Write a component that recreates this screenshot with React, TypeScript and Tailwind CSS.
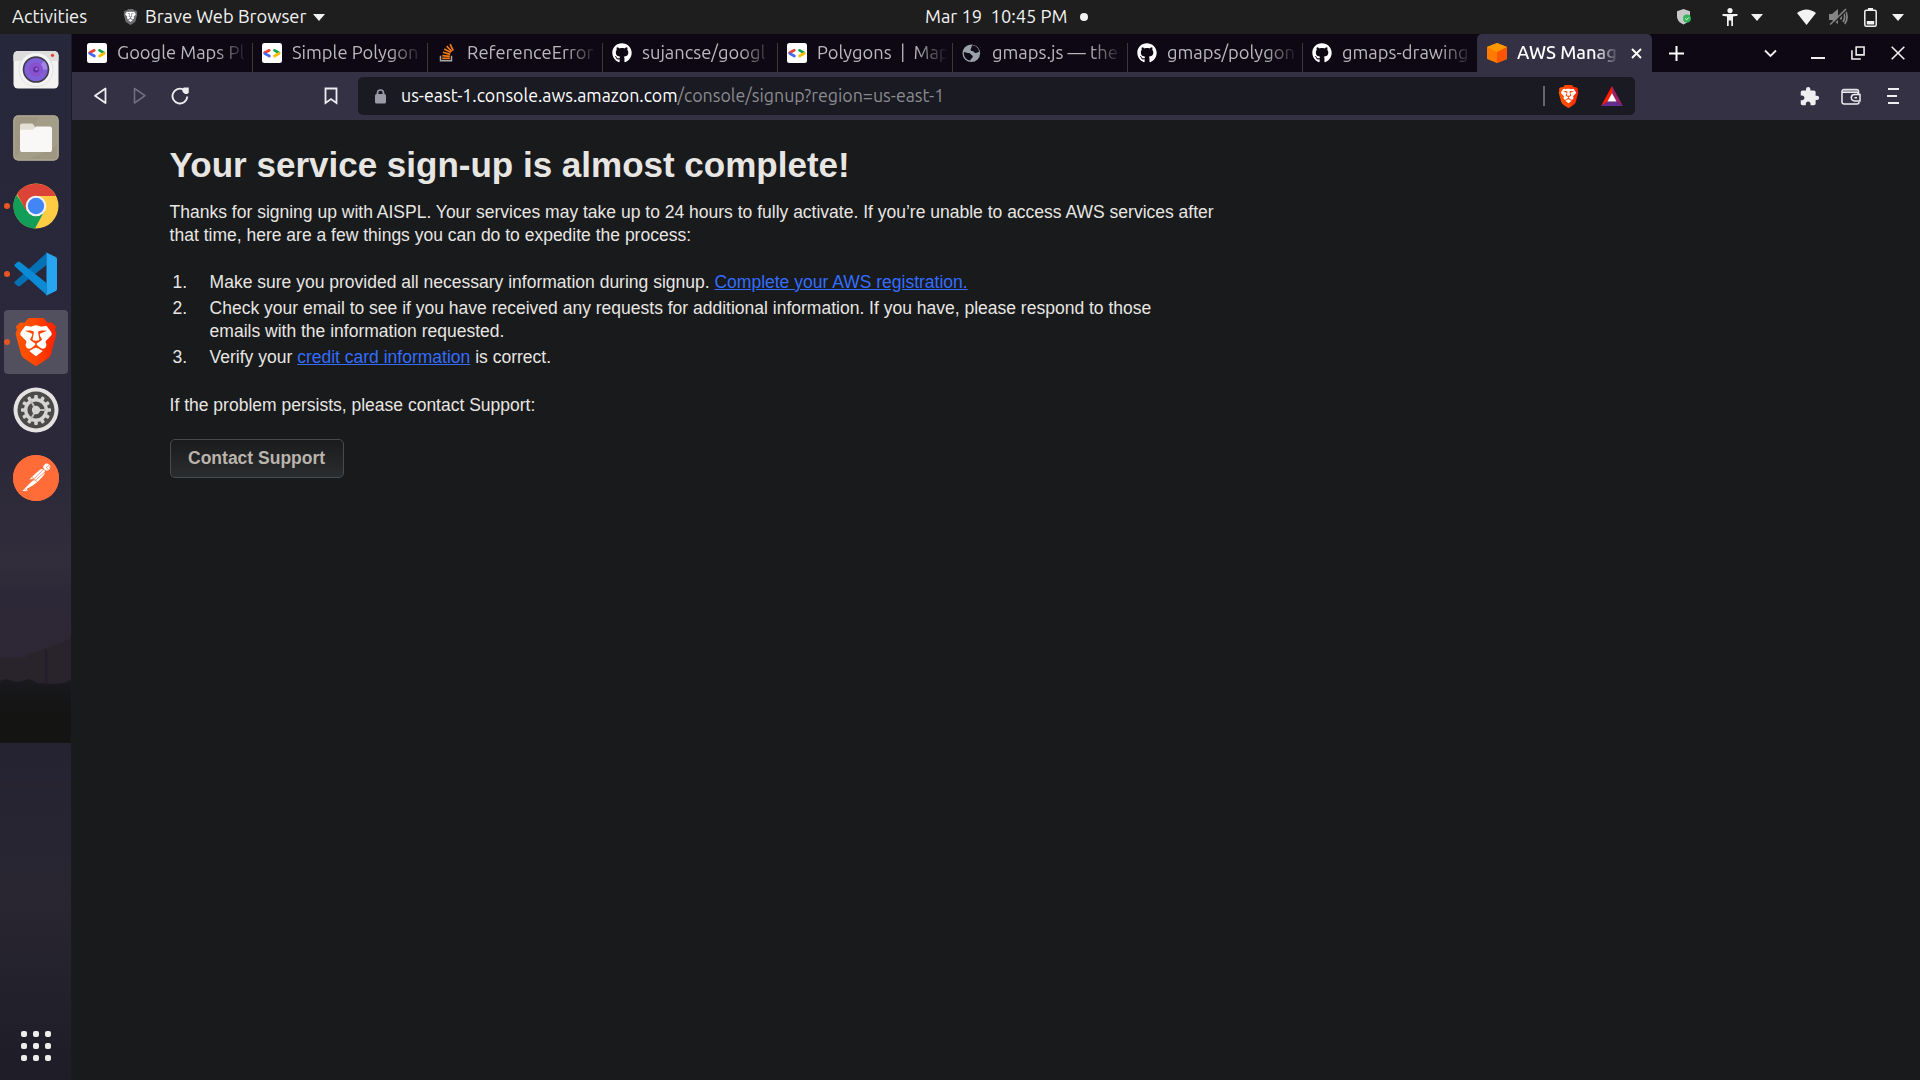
import type { ReactNode } from "react";
import { SiBrave, SiPostman } from "react-icons/si";
import { FaGithub } from "react-icons/fa";
import { MdExtension } from "react-icons/md";

function GoogleDevIcon() {
  return (
    <svg className="h-5 w-5" viewBox="0 0 20 20">
      <rect width="20" height="20" rx="2.5" fill="#fff" />
      <g strokeWidth="2.7" strokeLinecap="round">
        <path d="M2.6 9.8 L7.3 7.3" stroke="#ea4335" />
        <path d="M2.9 10.6 L7.4 13" stroke="#4468f0" />
        <path d="M12.5 7.3 L17 9.9" stroke="#0da34d" />
        <path d="M17 10.5 L12.6 13" stroke="#fbbc04" />
      </g>
    </svg>
  );
}

function StackIcon() {
  return (
    <svg className="h-5 w-5" viewBox="0 0 20 20" fill="none">
      <path d="M3.5 12.8v4.9h11v-4.9" stroke="#a5a6a8" strokeWidth="1.5" />
      <g stroke="#f47b13" strokeWidth="1.7">
        <path d="M5.2 15.3h7.6M5.3 12.6l7.5.8M5.9 9.3l7.2 2.1M7.2 6l6.6 3.5M9.7 3.2l5.1 5.3M13.1 1.1l3.1 6.5" />
      </g>
    </svg>
  );
}

function GlobeIcon() {
  return (
    <svg className="h-5 w-5" viewBox="0 0 20 20">
      <circle cx="9.3" cy="10.2" r="8.8" fill="#9aa1a9" />
      <path d="M10.2 2.3c3.6.2 6.3 2.8 6.9 6.4-1.5.1-1.8 1.3-3.6 1.2-1.8-.1-1.5-1.8-3.4-1.9-1.6-.1-2-1.2-1.2-2.3.8-1 .5-2.6 1.3-3.4zM1.9 8.9c2.6 1 6.2.7 6.8 2.2.5 1.3 2.3.9 2.1 2.6-.2 1.5-2 1.5-2.4 3.9C4.200 17 1.300 13.200 1.900 8.900z" fill="#100a1b" />
    </svg>
  );
}

function CubeIcon() {
  return (
    <svg className="h-5 w-5 shrink-0" viewBox="0 0 20 20">
      <path d="M10 0l10 4v12l-10 4-10-4V4z" fill="#ff7a00" />
      <path d="M10 0l10 4-10 5L0 4z" fill="#ff9900" />
      <path d="M20 4v12l-10 4V9z" fill="#ff5404" />
    </svg>
  );
}

function Lion({ mono = false }: { mono?: boolean }) {
  return (
    <span className="relative block h-full w-full">
      <svg className="absolute inset-0 h-full w-full" viewBox="0 0 24 24">
        <defs>
          <linearGradient id="lionFill" x1="0" x2="1">
            <stop offset="0" stopColor="#ff5601" />
            <stop offset=".5" stopColor="#ff4500" />
            <stop offset="1" stopColor="#ff2000" />
          </linearGradient>
        </defs>
        <path d="M6 3.500h12l3 4-2 9-7 4-7-4-2-9z" fill="#fff" />
      </svg>
      <SiBrave className="absolute inset-0 h-full w-full" fill={mono ? "#6d6d70" : "url(#lionFill)"} />
    </span>
  );
}

function CameraIcon() {
  return (
    <svg className="h-[46px] w-[46px]" viewBox="0 0 46 46">
      <rect x=".5" y="4" width="45" height="37.500" rx="4.500" fill="#f3f2f1" />
      <path d="M.5 14V8.500A4.500 4.500 0 0 1 5 4h36a4.500 4.500 0 0 1 4.500 4.500V14z" fill="#dedddc" />
      <circle cx="23" cy="22.500" r="17" fill="#f5f4f4" stroke="#dcdbda" strokeWidth=".8" />
      <circle cx="23" cy="22.500" r="13.300" fill="#403d4c" />
      <circle cx="23" cy="22.500" r="11.600" fill="#8060d6" />
      <path d="M23 22.500L31 14a11.600 11.600 0 0 1 3.400 8.500z" fill="#a287ea" />
      <circle cx="23" cy="22.500" r="7" fill="#8a50cd" />
      <circle cx="23" cy="22.500" r="3" fill="#6134a4" />
      <circle cx="23.600" cy="22" r="1.200" fill="#a875e0" />
      <circle cx="39.500" cy="8.300" r="1.600" fill="#e93a30" />
    </svg>
  );
}

function FilesIcon() {
  return (
    <svg className="h-[46px] w-[46px]" viewBox="0 0 46 46">
      <rect x=".8" y=".8" width="44.400" height="44.400" rx="4.500" fill="#9f9781" stroke="#b5ae9b" strokeWidth="1.200" />
      <path d="M26 1.500L45 1.500V30L14 45H2z" fill="#a9a28d" opacity=".6" />
      <path d="M7 14v-3.500A2 2 0 0 1 9 8.500h9.500c1 0 1.400.5 2 1.200L23 13v4H7z" fill="#e3dfd4" />
      <path d="M7 14.800h13l3.300-3.300H37a2 2 0 0 1 2 2V35a2 2 0 0 1-2 2H9a2 2 0 0 1-2-2z" fill="#f9f8f6" />
    </svg>
  );
}

function ChromeIcon() {
  return (
    <svg className="h-[46px] w-[46px]" viewBox="0 0 46 46">
      <circle cx="23" cy="23" r="22.500" fill="#fc4" />
      <path d="M23 23L14.300 28 3.500 11.700A22.500 22.500 0 0 0 22 45.500L32 27z" fill="#129d58" />
      <path d="M23 13h20A22.500 22.500 0 0 0 4 11l9.500 17L17 15z" fill="#db4437" />
      <circle cx="23" cy="23" r="10.300" fill="#f3f3f3" />
      <circle cx="23" cy="23" r="8.200" fill="#4286f5" />
    </svg>
  );
}

function CodeIcon() {
  return (
    <svg className="h-[46px] w-[46px]" viewBox="0 0 46 46">
      <path d="M2 30.500a1.500 1.500 0 0 0 0 2.300l2.500 2.300a2 2 0 0 0 2.400 0L33.500 14V2z" fill="#0471b4" />
      <path d="M2 15.500a1.500 1.500 0 0 1 0-2.300l2.500-2.300a2 2 0 0 1 2.400 0L33.500 32v12z" fill="#0b8bd6" />
      <path d="M33.500 1.600L42.800 6a2 2 0 0 1 1.200 1.800v30.400a2 2 0 0 1-1.200 1.800l-9.300 4.400a2 2 0 0 1-1.300-.4c.8.700 1.300.2 1.300-1V3c0-1.200-.5-1.700-1.300-1a2 2 0 0 1 1.300-.4z" fill="#28a5f1" />
    </svg>
  );
}

const TEETH = Array.from({ length: 12 }, (_, i) => i * 30);

function SettingsIcon() {
  return (
    <svg className="h-[46px] w-[46px]" viewBox="0 0 46 46">
      <circle cx="23" cy="23" r="22.500" fill="#e4e3e2" />
      <circle cx="23" cy="23" r="18.500" fill="#4b4b4a" />
      {TEETH.map((a) => (
        <rect key={a} x="21.200" y="8" width="3.600" height="5" rx="1" fill="#d5d4d3" transform={`rotate(${a} 23 23)`} />
      ))}
      <circle cx="23" cy="23" r="10.300" fill="none" stroke="#d5d4d3" strokeWidth="3.400" />
      <path d="M23 23h10M23 23l-5-9M23 23l-5 9" stroke="#bdbcbb" strokeWidth="2" />
      <circle cx="23" cy="23" r="4.200" fill="#d5d4d3" />
    </svg>
  );
}

function PostmanIcon() {
  return (
    <span className="flex h-[46px] w-[46px] items-center justify-center rounded-full bg-[radial-gradient(circle,#fff_60%,#ff6c37_62%)]">
      <SiPostman className="h-[46px] w-[46px] text-[#ff6c37]" />
    </span>
  );
}

function DockItem({ children, dot, active }: { children: ReactNode; dot?: boolean; active?: boolean }) {
  return (
    <div className={active ? "relative flex h-16 w-16 items-center justify-center rounded bg-[#52505f]" : "relative flex h-16 w-16 items-center justify-center"}>
      {dot && <span className="absolute top-[29px] left-0 h-1.5 w-1.5 rounded-full bg-[#e95420]" />}
      {children}
    </div>
  );
}

function Dock() {
  return (
    <aside className="relative flex w-[72px] shrink-0 flex-col items-center justify-between border-r border-[#1a1a22] bg-[#27273b]">
      <svg className="absolute inset-0 h-full w-full" viewBox="0 34 72 1046" preserveAspectRatio="none">
        <defs>
          <linearGradient id="sky" x1="0" y1="0" x2="0" y2="1">
            <stop offset="0" stopColor="#27273b" />
            <stop offset=".65" stopColor="#2b2839" />
            <stop offset=".8" stopColor="#312d3b" />
            <stop offset=".85" stopColor="#2d2837" />
            <stop offset="1" stopColor="#2e2633" />
          </linearGradient>
          <linearGradient id="low" x1="0" y1="0" x2="0" y2="1">
            <stop offset="0" stopColor="#252332" />
            <stop offset=".45" stopColor="#292632" />
            <stop offset="1" stopColor="#1d1c27" />
          </linearGradient>
          <linearGradient id="ground" x1="0" y1="0" x2="0" y2="1">
            <stop offset="0" stopColor="#1a1a20" />
            <stop offset=".35" stopColor="#141514" />
            <stop offset="1" stopColor="#141412" />
          </linearGradient>
        </defs>
        <rect y="34" width="72" height="660" fill="url(#sky)" />
        <path d="M0 658h25l4-5h8l9-5 14-4 12-6v60H0z" fill="#29232c" />
        <path d="M47 650v34" stroke="#1f1d27" strokeWidth="1.500" />
        <path d="M0 681l5-2 8 2 5 1 12-3 8 4 16 1 10-1 8-3v63H0z" fill="url(#ground)" />
        <rect y="743" width="72" height="337" fill="url(#low)" />
        <rect y="783" width="72" height="2" fill="#2a232e" />
      </svg>
      <div className="relative flex flex-col gap-1 pt-1">
        <DockItem><CameraIcon /></DockItem>
        <DockItem><FilesIcon /></DockItem>
        <DockItem dot><ChromeIcon /></DockItem>
        <DockItem dot><CodeIcon /></DockItem>
        <DockItem dot active>
          <span className="h-12 w-12"><Lion /></span>
        </DockItem>
        <DockItem><SettingsIcon /></DockItem>
        <DockItem><PostmanIcon /></DockItem>
      </div>
      <div className="relative mb-[19px] grid grid-cols-3 gap-1.5">
        {Array.from({ length: 9 }, (_, i) => (
          <span key={i} className="h-1.5 w-1.5 rounded-[2px] bg-[#eeeeec]" />
        ))}
      </div>
    </aside>
  );
}

function Caret() {
  return (
    <svg className="h-[7px] w-[12px]" viewBox="0 0 12 7"><path d="M0 0h12L6 7z" fill="#f2f2f2" /></svg>
  );
}

function TopBar() {
  return (
    <header className="grid h-[34px] grid-cols-3 items-center bg-[#1e1e1e] text-[18.330px] leading-[34px] text-[#f2f2f2]">
      <div className="flex items-center pl-3">
        <span className="w-[110px] pb-px leading-[33px]">Activities</span>
        <span className="h-4 w-[17px]"><Lion mono /></span>
        <span className="ml-[6px] w-[162px] pb-px leading-[33px] whitespace-nowrap">Brave Web Browser</span>
        <span className="ml-[6px] flex"><Caret /></span>
      </div>
      <div className="flex items-center pl-[285px] whitespace-pre">
        <span className="w-[142px] pb-[2px] leading-[32px]">Mar 19  10:45 PM</span>
        <span className="ml-[13px] h-2 w-2 rounded-full bg-[#f2f2f2]" />
      </div>
      <div className="flex items-center justify-end pr-4">
        <svg className="mr-[30px] h-4 w-[15px]" viewBox="0 0 15 16">
          <path d="M6.500 0L13 2.300V7c0 4-2.500 7-6.500 8.500C2.500 14 0 11 0 7V2.300z" fill="#c8c8c8" />
          <circle cx="10" cy="9.500" r="3.900" fill="#2fb457" />
          <path d="M8.200 9.500l1.400 1.300 2.200-2.300" stroke="#fff" fill="none" />
        </svg>
        <svg className="mr-[13px] h-[18px] w-4" viewBox="0 0 16 18" fill="#f2f2f2">
          <circle cx="8" cy="2.600" r="2.600" />
          <path d="M.5 6h15v1.800L11 8.500V18H9.300v-5.500H6.700V18H5V8.500L.5 7.800z" />
        </svg>
        <Caret />
        <svg className="ml-[34px] h-4 w-[19px]" viewBox="0 0 19 16"><path d="M0 4C6-.8 13-.8 19 4L9.500 16z" fill="#f2f2f2" /></svg>
        <svg className="ml-[13px] h-[18px] w-[19px]" viewBox="0 0 19 18" fill="none" stroke="#848484" strokeWidth="1.700">
          <path d="M0 6h3l6-5v15L3 12H0z" fill="#848484" stroke="none" />
          <path d="M11.500 6.500c1 1.500 1 3.500 0 5M14 4c2 3 2 7 0 10M15.800 2c3 4 3 10 0 14" />
          <path d="M2.300 17.500L18 2" stroke="#1e1e1e" strokeWidth="1.500" />
          <path d="M1.200 16.500L17 1" strokeWidth="1.500" />
        </svg>
        <svg className="ml-[16px] h-[19px] w-[13px]" viewBox="0 0 13 19">
          <rect x=".8" y="2.200" width="11.400" height="16" rx="1.500" fill="none" stroke="#f2f2f2" strokeWidth="1.500" />
          <path d="M4 0h5v2H4zM2.800 13h7.400v3.500H2.800z" fill="#f2f2f2" />
        </svg>
        <span className="ml-[15px] flex"><Caret /></span>
      </div>
    </header>
  );
}

function Tab({ icon, title, last }: { icon: ReactNode; title: string; last?: boolean }) {
  return (
    <div className="flex h-[38px] w-[175px] shrink-0 items-end">
      <div className="flex h-[38px] min-w-0 flex-1 items-center pl-[9px]">
        <span className="flex w-5 shrink-0 justify-center text-[20px] text-white">{icon}</span>
        <span className="ml-[10px] w-[131px] shrink-0 overflow-hidden mask-r-from-75% mask-r-to-100% pb-[2px] text-[18.330px] leading-[36px] whitespace-pre text-[#b9b8bd]">{title}</span>
      </div>
      {!last && <span className="h-[29px] w-px bg-[#3b393d]" />}
    </div>
  );
}

function TabStrip() {
  return (
    <div className="flex h-[38px] items-center bg-[#0d0814] pl-[6px]">
      <Tab icon={<GoogleDevIcon />} title="Google Maps Pl" />
      <Tab icon={<GoogleDevIcon />} title="Simple Polygon" />
      <Tab icon={<StackIcon />} title="ReferenceError" />
      <Tab icon={<FaGithub />} title="sujancse/googl" />
      <Tab icon={<GoogleDevIcon />} title="Polygons  |  Map" />
      <Tab icon={<GlobeIcon />} title="gmaps.js — the" />
      <Tab icon={<FaGithub />} title="gmaps/polygon" />
      <Tab icon={<FaGithub />} title="gmaps-drawing" last />
      <div className="-ml-px flex h-[38px] w-[175px] items-center rounded-t-[5px] bg-[#333143] pl-[10px]">
        <CubeIcon />
        <span className="ml-[10px] w-[103px] shrink-0 overflow-hidden mask-r-from-75% mask-r-to-100% pb-[2px] text-[18.330px] leading-[36px] font-medium whitespace-nowrap text-white">AWS Manag</span>
        <svg className="ml-[11px] h-[11px] w-[11px]" viewBox="0 0 11 11" stroke="#fff" strokeWidth="1.900"><path d="M1 1l9 9M10 1l-9 9" /></svg>
      </div>
      <svg className="ml-[17px] h-[15px] w-[15px]" viewBox="0 0 15 15" stroke="#fff" strokeWidth="2"><path d="M7.500 0v15M0 7.500h15" /></svg>
      <svg className="ml-auto h-[9px] w-[13px]" viewBox="0 0 13 9" fill="none" stroke="#eee" strokeWidth="1.900"><path d="M1 1.500l5.500 5.500L12 1.500" /></svg>
      <svg className="ml-[34px] h-4 w-[14px]" viewBox="0 0 14 16" stroke="#eee" strokeWidth="2"><path d="M0 13h14" /></svg>
      <svg className="ml-[26px] h-[14px] w-[14px]" viewBox="0 0 15 15" fill="none" stroke="#eee" strokeWidth="1.700"><path d="M5.500 1h8.500v8.500H5.500zM1 4.500V14h9.500" /></svg>
      <svg className="mr-[15px] ml-[26px] h-[14px] w-[14px]" viewBox="0 0 14 14" stroke="#eee" strokeWidth="1.600"><path d="M.7.7l12.600 12.600M13.300.7L.7 13.300" /></svg>
    </div>
  );
}

function Toolbar() {
  return (
    <div className="flex h-12 items-center bg-[#333143]">
      <svg className="ml-[21px] h-[18px] w-[14px]" viewBox="0 0 14 18" fill="none" stroke="#eeedf0" strokeWidth="1.800" strokeLinejoin="round"><path d="M12.500 1.500v14.500L2 8.700z" /></svg>
      <svg className="ml-[26px] h-[18px] w-[14px]" viewBox="0 0 14 18" fill="none" stroke="#716f7d" strokeWidth="1.600" strokeLinejoin="round"><path d="M1.500 1.500v14.500L12 8.700z" /></svg>
      <svg className="ml-[24px] h-[18px] w-[18px]" viewBox="0 0 18 18" fill="none" stroke="#eeedf0" strokeWidth="1.900">
        <path d="M16.300 9.500A7.400 7.400 0 1 1 12.500 2.600" />
        <path d="M13.200 1.500h3.600v3.700a2 2 0 0 1-3.600-3.700z" fill="#eeedf0" />
      </svg>
      <svg className="ml-[135px] h-[18px] w-[14px]" viewBox="0 0 14 18" fill="none" stroke="#eeedf0" strokeWidth="1.800"><path d="M1.500 1.500h11v14.500L7 12l-5.500 4z" /></svg>
      <div className="ml-[20px] flex h-[38px] w-[1277px] items-center rounded-[5px] bg-[#1a1a23] pl-[17px]">
        <svg className="h-[15px] w-[11px]" viewBox="0 0 11 15"><path d="M2.500 6V4a3 3 0 0 1 6 0v2" fill="none" stroke="#9a9ba6" strokeWidth="1.700" /><rect y="5" width="11" height="9.500" rx="1.500" fill="#9a9ba6" /></svg>
        <span className="ml-[15px] pb-[2px] text-[17.780px] leading-[36px] whitespace-nowrap text-white">us-east-1.console.aws.amazon.com<span className="text-[#8b8b8e]">/console/signup?region=us-east-1</span></span>
        <span className="mr-[11px] ml-auto h-5 w-0.5 bg-[#66656e]" />
        <span className="h-[23px] w-[25px]"><Lion /></span>
        <svg className="mr-[12px] ml-[20px] h-5 w-[22px]" viewBox="0 0 22 20">
          <path d="M11 0L0 20l7-4.500L11 7z" fill="#ff1a00" />
          <path d="M11 0l11 20-7-4.500L11 7z" fill="#9e1f63" />
          <path d="M0 20h22l-7-4.500H7z" fill="#662d91" />
          <path d="M11 7l4.500 8.500h-9z" fill="#fff" />
        </svg>
      </div>
      <MdExtension className="ml-auto h-[21px] w-[21px] text-[#eeedf0]" />
      <svg className="ml-[21px] h-[17px] w-5" viewBox="0 0 20 17" fill="none" stroke="#eeedf0" strokeWidth="1.500">
        <path d="M17.500 5V3.500a2 2 0 0 0-2-2H3a2 2 0 0 0-2 2v10.300A2 2 0 0 0 3 16h13a2 2 0 0 0 2-2M1 4.300h15.500l1.500 2M19 6.500h-5.500a3.200 3.200 0 0 0 0 6.400H19zM13.500 9.700h2.500" />
        <path d="M2 2.800h14" stroke="#a9a8b2" strokeWidth="2" />
      </svg>
      <svg className="mr-[21px] ml-[26px] h-[17px] w-3" viewBox="0 0 12 17" stroke="#eeedf0" strokeWidth="1.800"><path d="M1 1h11M0 8h10M1 15h11" /></svg>
    </div>
  );
}

const LINK = "text-[#346dff] underline";

function Page() {
  return (
    <main className="flex-1 bg-[#181a1b] pt-[24px] pl-[97.600px] font-['Liberation_Sans',Arial,sans-serif] text-[17.500px] leading-[22.750px] text-[#e8e6e3]">
      <h1 className="text-[35px] leading-[42px] font-bold whitespace-nowrap">Your service sign-up is almost complete!</h1>
      <p className="mt-[15px] whitespace-nowrap">
        Thanks for signing up with AISPL. Your services may take up to 24 hours to fully activate. If you’re unable to access AWS services after
        <br />
        that time, here are a few things you can do to expedite the process:
      </p>
      <ol className="mt-[24.500px] flex flex-col gap-[3px] whitespace-nowrap">
        <li className="flex"><span className="w-10 shrink-0 pl-[3px]">1.</span><span>Make sure you provided all necessary information during signup. <a className={LINK}>Complete your AWS registration.</a></span></li>
        <li className="flex"><span className="w-10 shrink-0 pl-[3px]">2.</span><span>Check your email to see if you have received any requests for additional information. If you have, please respond to those<br />emails with the information requested.</span></li>
        <li className="flex pt-[0.600px]"><span className="w-10 shrink-0 pl-[3px]">3.</span><span>Verify your <a className={LINK}>credit card information</a> is correct.</span></li>
      </ol>
      <p className="mt-[25.400px]">If the problem persists, please contact Support:</p>
      <button className="mt-[22.250px] flex h-[39px] w-[174px] items-center justify-center rounded-[5px] border border-[#484a4c] bg-linear-to-b from-[#1a1b1c] to-[#2a2d2f] font-bold text-[#b9b4ac]">Contact Support</button>
    </main>
  );
}

export default function App() {
  return (
    <div className="flex h-[1080px] w-[1920px] flex-col overflow-hidden bg-[#181a1b] font-['Ubuntu','Noto_Sans',sans-serif]">
      <TopBar />
      <div className="flex min-h-0 flex-1">
        <Dock />
        <div className="flex min-w-0 flex-1 flex-col">
          <TabStrip />
          <Toolbar />
          <Page />
        </div>
      </div>
    </div>
  );
}
